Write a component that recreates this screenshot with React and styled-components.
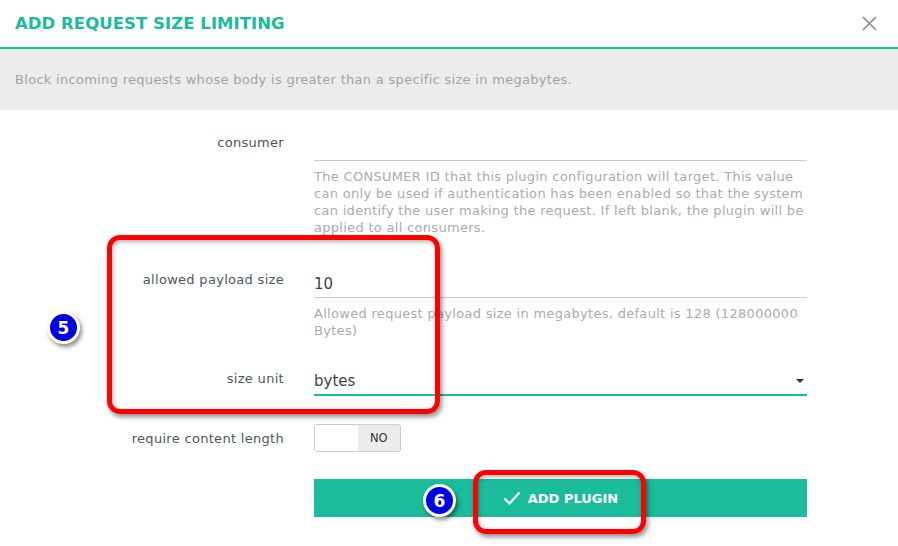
import React from 'react';
import styled, {createGlobalStyle} from 'styled-components';

// Global
const GlobalStyle = createGlobalStyle`
html, body {
  margin: 0;
  padding: 0;
  background: #fff;
}
body {
  font-family: "DejaVu Sans", "Open Sans", sans-serif;
  overflow: hidden;
}
`

// Stylings
const Modal = styled.div`
position: relative;
width: 898px;
height: 546px;
background: #fff;
`
const Header = styled.div`
height: 47px;
padding: 0 19px 0 15px;
display: flex;
align-items: center;
justify-content: space-between;
border-bottom: 2px solid #1abc9c;
`
const Title = styled.h1`
margin: 0;
font-size: 16.5px;
font-weight: bold;
color: #1abc9c;
letter-spacing: 0.05px;
`
const Close = styled.button`
width: 20px;
height: 20px;
padding: 0;
border: none;
background: none;
cursor: pointer;
display: flex;
align-items: center;
justify-content: center;
`
const Description = styled.div`
height: 61px;
padding-left: 15px;
display: flex;
align-items: center;
background: #ececec;
color: #a3a3a3;
font-size: 13px;
letter-spacing: 0.3px;
`
const Form = styled.div`
padding-top: 21px;
display: grid;
grid-template-columns: 284px 493px;
column-gap: 30px;
align-items: start;
`
const Label = styled.div`
text-align: right;
font-size: 13px;
letter-spacing: 0.3px;
color: #4b5861;
padding-top: ${p => p.top || 4}px;
`
const Control = styled.div`
padding-bottom: ${p => p.bottom || 0}px;
`
const Input = styled.div`
position: relative;
height: ${p => p.active ? 31 : 30}px;
box-sizing: border-box;
border-bottom: ${p => p.active ? '2px solid #1abc9c' : '1px solid #c9c9c9'};
font-size: 15px;
color: #444;
display: flex;
align-items: center;
padding-top: 2px;
`
const Caret = styled.span`
position: absolute;
right: 3px;
top: 14px;
width: 0;
height: 0;
border-left: 4px solid transparent;
border-right: 4px solid transparent;
border-top: 4px solid #333;
`
const Help = styled.div`
margin-top: 7px;
font-size: 13px;
letter-spacing: 0.3px;
line-height: 17px;
color: #ababab;
`
const Toggle = styled.div`
width: 87px;
height: 28px;
box-sizing: border-box;
border: 1px solid #ccc;
border-radius: 3px;
display: flex;
overflow: hidden;
`
const ToggleSide = styled.div`
flex: 1;
background: ${p => p.on ? '#ececec' : '#fff'};
display: flex;
align-items: center;
justify-content: center;
font-size: 11.5px;
color: #333;
`
const SubmitButton = styled.button`
grid-column: 2;
height: 38px;
border: none;
background: #1abc9c;
color: #fff;
font-family: inherit;
font-size: 13px;
font-weight: bold;
display: flex;
align-items: center;
justify-content: center;
gap: 7px;
cursor: pointer;
`

// Annotations
const Marker = styled.div`
position: absolute;
left: ${p => p.x}px;
top: ${p => p.y}px;
width: ${p => p.w}px;
height: ${p => p.h}px;
box-sizing: border-box;
border: 5px solid #ff0000;
border-radius: 13px;
box-shadow: 2px 3px 5px rgba(0,0,0,0.45), inset 1px 2px 4px rgba(0,0,0,0.3);
pointer-events: none;
`
const Badge = styled.div`
position: absolute;
left: ${p => p.x}px;
top: ${p => p.y}px;
width: 33px;
height: 33px;
box-sizing: border-box;
border-radius: 50%;
border: 3px solid #fff;
background: #0000e6;
color: #fff;
font-family: "DejaVu Sans", sans-serif;
font-weight: bold;
font-size: 17px;
display: flex;
align-items: center;
justify-content: center;
box-shadow: 2px 3px 4px rgba(0,0,0,0.45);
`

const CloseIcon = () => (
  <svg width="15" height="15" viewBox="0 0 15 15">
    <path d="M1 1 L14 14 M14 1 L1 14" stroke="#8a8a8a" strokeWidth="1.6" fill="none" />
  </svg>
)

const CheckIcon = () => (
  <svg width="18" height="14" viewBox="0 0 18 14">
    <path d="M1.5 7.5 L6.5 12.5 L16.5 1.5" stroke="#fff" strokeWidth="2.2" fill="none" />
  </svg>
)

export default function App() {
  return (
    <Modal>
      <GlobalStyle />
      <Header>
        <Title>ADD REQUEST SIZE LIMITING</Title>
        <Close><CloseIcon /></Close>
      </Header>
      <Description>Block incoming requests whose body is greater than a specific size in megabytes.</Description>

      <Form>
        <Label top={4}>consumer</Label>
        <Control bottom={32}>
          <Input />
          <Help>The CONSUMER ID that this plugin configuration will target. This value can only be used if authentication has been enabled so that the system can identify the user making the request. If left blank, the plugin will be applied to all consumers.</Help>
        </Control>

        <Label top={4}>allowed payload size</Label>
        <Control bottom={26}>
          <Input>10</Input>
          <Help>Allowed request payload size in megabytes, default is 128 (128000000 Bytes)</Help>
        </Control>

        <Label top={6}>size unit</Label>
        <Control bottom={28}>
          <Input active>bytes<Caret /></Input>
        </Control>

        <Label top={7}>require content length</Label>
        <Control bottom={27}>
          <Toggle>
            <ToggleSide />
            <ToggleSide on>NO</ToggleSide>
          </Toggle>
        </Control>

        <SubmitButton><CheckIcon />ADD PLUGIN</SubmitButton>
      </Form>

      <Marker x={107} y={235} w={333} h={179} />
      <Marker x={473} y={470} w={173} h={64} />
      <Badge x={47} y={311}>5</Badge>
      <Badge x={423} y={484}>6</Badge>
    </Modal>
  )
}
